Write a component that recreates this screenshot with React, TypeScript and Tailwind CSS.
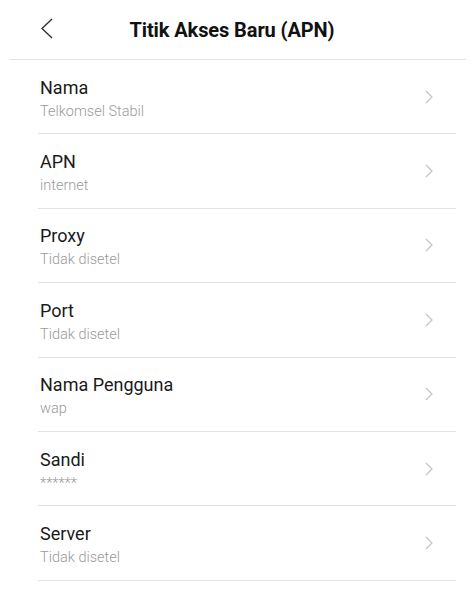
const items = [
  { title: 'Nama', value: 'Telkomsel Stabil' },
  { title: 'APN', value: 'internet' },
  { title: 'Proxy', value: 'Tidak disetel' },
  { title: 'Port', value: 'Tidak disetel' },
  { title: 'Nama Pengguna', value: 'wap' },
  { title: 'Sandi', value: '******' },
  { title: 'Server', value: 'Tidak disetel' },
]

function Chevron({ className }: { className?: string }) {
  return (
    <svg viewBox="0 0 8 14" className={className} fill="none" stroke="currentColor" strokeWidth="1.2">
      <path d="M1 1l6 6-6 6" />
    </svg>
  )
}

export default function App() {
  return (
    <main className="w-[476px] h-[590px] bg-white font-['Roboto',sans-serif] overflow-hidden">
      <header className="mx-[10px] h-[60px] border-b border-[#e2e2e2] flex items-center relative">
        <svg viewBox="0 0 13 21" className="absolute left-[30px] top-[18px] w-[13px] h-[21px] text-[#333]" fill="none" stroke="currentColor" strokeWidth="1.4">
          <path d="M12 1L2 10.5 12 20" />
        </svg>
        <h1 className="w-full text-center pr-[12px] text-[20px] font-bold text-[#111] tracking-[-0.1px]">
          Titik Akses Baru (APN)
        </h1>
      </header>
      <ul className="ml-[38px] mr-[20px]">
        {items.map((item) => (
          <li
            key={item.title}
            className="h-[74.4px] border-b border-[#e2e2e2] flex items-center justify-between pl-[2px] pr-[23px]"
          >
            <div className="flex flex-col pt-[6px]">
              <span className="text-[18px] leading-[22px] text-[#1a1a1a]">{item.title}</span>
              <span className="mt-[2px] text-[14.5px] leading-[22px] font-light text-[#9a9a9a]">{item.value}</span>
            </div>
            <Chevron className="w-[8px] h-[14px] text-[#c4c4c4]" />
          </li>
        ))}
      </ul>
    </main>
  )
}
